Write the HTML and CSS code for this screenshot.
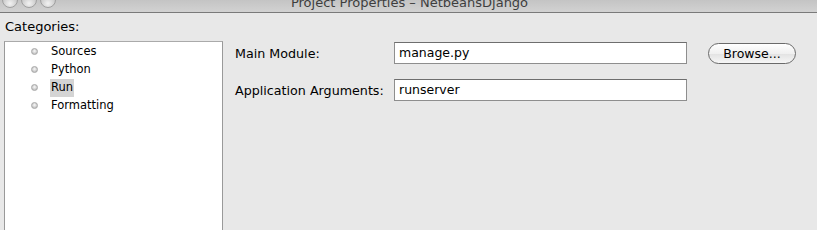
FILE: index.html
```html
<!DOCTYPE html>
<html>
<head>
<meta charset="utf-8">
<link rel="stylesheet" href="styles.css">
</head>
<body>
<div class="window">
  <div class="titlebar">
    <div class="lights"><span class="light"></span><span class="light"></span><span class="light"></span></div>
    <div class="title">Project Properties – NetbeansDjango</div>
  </div>
  <div class="content">
    <div class="left">
      <div class="cat-label">Categories:</div>
      <div class="list">
        <div class="item"><span class="bullet"></span><span class="name">Sources</span></div>
        <div class="item"><span class="bullet"></span><span class="name">Python</span></div>
        <div class="item"><span class="bullet"></span><span class="name selected">Run</span></div>
        <div class="item"><span class="bullet"></span><span class="name">Formatting</span></div>
      </div>
    </div>
    <div class="right">
      <div class="row">
        <label class="lbl">Main Module:</label>
        <div class="field">manage.py</div>
        <button class="btn">Browse...</button>
      </div>
      <div class="row">
        <label class="lbl">Application Arguments:</label>
        <div class="field">runserver</div>
      </div>
    </div>
  </div>
</div>
</body>
</html>
```
FILE: styles.css
```css
html, body { margin: 0; padding: 0; }
body {
  width: 817px; height: 230px; overflow: hidden;
  background: #e8e8e8;
  font-family: "DejaVu Sans", "Liberation Sans", sans-serif;
  font-size: 12px; color: #000;
}
.window { display: flex; flex-direction: column; height: 230px; }
.titlebar {
  height: 12px; flex: none; position: relative; overflow: hidden;
  background: linear-gradient(#c4c4c4, #d2d2d2);
  border-bottom: 1px solid #7a7a7a;
}
.lights { position: absolute; left: 2px; top: -8px; display: flex; gap: 3px; }
.light {
  width: 14px; height: 14px; border-radius: 50%;
  border: 1px solid #a0a0a0;
  background: radial-gradient(circle at 50% 75%, #f2f2f2, #c2c2c2 70%);
}
.title {
  position: absolute; left: 0; right: 0; top: -5px; text-align: center;
  font-size: 13px; color: #3e3e3e; padding-left: 2px;
}
.content { flex: 1; display: flex; }
.left {
  width: 223px; box-sizing: border-box; flex: none;
  display: flex; flex-direction: column; padding-left: 4px;
}
.cat-label { height: 28px; line-height: 20px; padding: 4px 0 0 1px; box-sizing: border-box; font-size: 13px; }
.list {
  flex: 1; background: #fff;
  border-left: 1px solid #999; border-right: 1px solid #999; border-top: 1px solid #aaa;
  padding-top: 1px;
}
.item { display: flex; align-items: center; height: 18px; padding-left: 26px; font-size: 11.5px; }
.bullet {
  width: 7px; height: 7px; border-radius: 50%; margin-right: 12px; margin-top: -2px;
  background: radial-gradient(circle at 50% 40%, #fafafa, #c4c4c4 70%);
  border: 1px solid #a8a8a8; box-sizing: border-box;
}
.name { padding: 1px 1px 2px; line-height: 15px; }
.selected { background: #d4d4d4; }
.right { flex: 1; padding: 29px 0 0 12px; display: flex; flex-direction: column; gap: 15px; }
.row { display: flex; align-items: center; height: 22px; }
.lbl { width: 159px; flex: none; font-size: 12.7px; }
.field {
  width: 293px; height: 22px; box-sizing: border-box; background: #fff;
  border: 1px solid #8e8e8e; border-top-color: #6e6e6e;
  padding: 2px 0 0 4px; line-height: 16px; font-size: 12.5px;
}
.btn {
  margin-left: 21px; width: 88px; height: 21px; border-radius: 11px;
  border: 1px solid #6a6a6a; background: linear-gradient(#ffffff, #f0f0f0 50%, #e2e2e2 51%, #f6f6f6);
  font-family: inherit; font-size: 12.5px; padding: 0; color: #000;
}
```
